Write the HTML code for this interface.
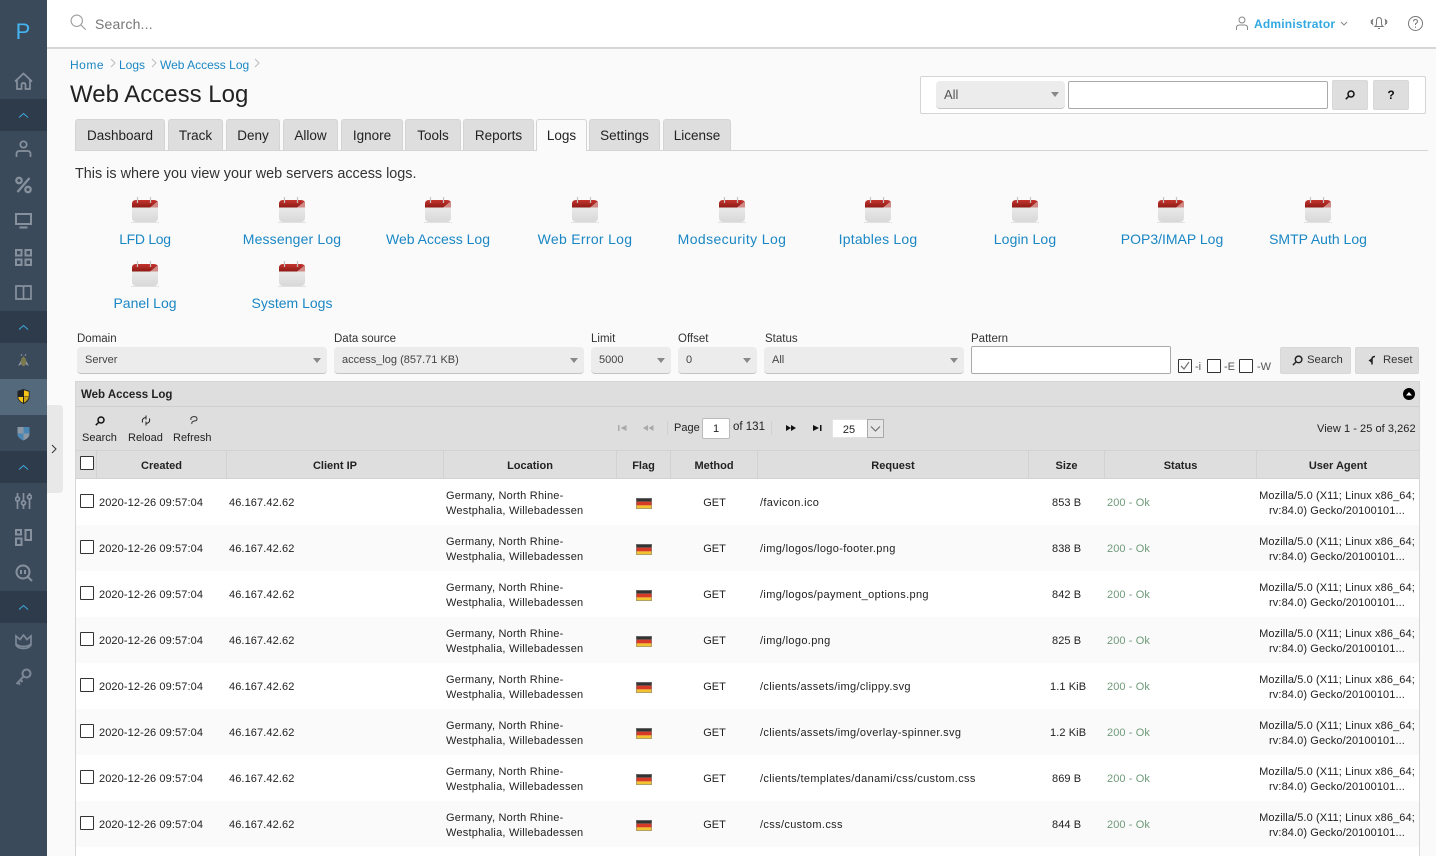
<!DOCTYPE html>
<html><head><meta charset="utf-8"><title>Web Access Log</title>
<style>
html,body{margin:0;padding:0}
body{width:1436px;height:856px;overflow:hidden;position:relative;background:#fafafa;font-family:"Liberation Sans",sans-serif;color:#222;font-size:11px}
.t{position:absolute;white-space:nowrap}
.c{text-align:center}
.a{position:absolute}
#side{position:absolute;left:0;top:0;width:47px;height:856px;background:#3b4a5b}
.band{position:absolute;left:0;width:47px;height:32px;background:#2e3b4a}
#side svg{position:absolute}
.ic{fill:none;stroke:#87919d;stroke-width:1.7}
.tab{position:absolute;top:119px;height:31px;background:#dedede;border:1px solid #d4d4d4;border-bottom:none;border-radius:3px 3px 0 0;box-sizing:border-box;text-align:center;font-size:13.5px;line-height:31px;color:#222}
.lk{position:absolute;width:160px;text-align:center;color:#1a87c4;font-size:14px;white-space:nowrap}
.sel{position:absolute;top:347px;height:27px;background:#ececec;border-bottom:1px solid #c4c4c4;border-radius:4px;box-sizing:border-box;padding:0 8px;line-height:27px;font-size:11px;color:#444}
.sel:after{content:"";position:absolute;right:6px;top:11px;border:4.5px solid transparent;border-top:5px solid #888;border-bottom:0}
.lab{position:absolute;top:333px;font-size:11.5px;color:#333}
.btn{position:absolute;background:#dedede;border:1px solid #d8d8d8;border-radius:2px;box-sizing:border-box}
.cb{position:absolute;width:12px;height:12px;border:1px solid #333;background:#fff;border-radius:1px}
.h{position:absolute;top:451px;height:28px;line-height:30px;text-align:center;font-weight:bold;font-size:11px;color:#222;border-right:1px solid #d2d2d2;box-sizing:border-box}
.r{position:absolute;left:76px;width:1343px;height:46px;background:#fff;font-size:11px;color:#222;letter-spacing:.1px}
.r.e{background:#fafafa}
.r .t{line-height:15px;top:17px}
.r .cb{left:4px;top:15px}
.r .l{left:370px;top:10px;letter-spacing:.22px}
.r .p{left:684px;letter-spacing:.35px}
.r .u{left:1181px;width:160px;text-align:center;top:10px}
.r .s{left:1031px;color:#6f9a7a}
.r .g{left:595px;width:87px;text-align:center;letter-spacing:0}
.r .i{left:153px}
.r .d{left:23px}
.r svg{position:absolute;left:560px;top:19px}
</style></head><body>

<div class="a" style="left:47px;top:0;width:1389px;height:47px;background:#fff;border-bottom:2px solid #d6d6d6"></div>
<svg class="a" style="left:70px;top:14px" width="18" height="18" viewBox="0 0 20 20" fill="none" stroke="#a0a0a0" stroke-width="1.300"><circle cx="7.500" cy="7.500" r="6.300"/><path d="M12 12l5.500 5.500"/></svg>
<div class="t" style="left:95px;top:16px;font-size:14px;color:#777;letter-spacing:.2px">Search...</div>

<svg class="a" style="left:1235px;top:16px" width="14" height="15" viewBox="0 0 14 15" fill="none" stroke="#888" stroke-width="1"><circle cx="7" cy="4" r="3"/><path d="M1.500 14v-2.500q0-2.500 3-2.500h5q3 0 3 2.500V14"/></svg>
<div class="t" style="left:1254px;top:17px;font-size:12px;font-weight:bold;color:#33a8e0;letter-spacing:.2px">Administrator</div>
<svg class="a" style="left:1340px;top:21px" width="8" height="6" viewBox="0 0 8 6" fill="none" stroke="#888" stroke-width="1"><path d="M1 1l3 3 3-3"/></svg>
<svg class="a" style="left:1370px;top:15px" width="18" height="16" viewBox="0 0 18 16" fill="none" stroke="#777" stroke-width="1"><path d="M5 11.500q1.500-1 1.500-3V6q0-3.500 2.500-3.500T11.500 6v2.500q0 2 1.500 3zM8 13.500h2"/><path d="M3 4q-1.500 3 0 6M1.500 5q-.7 2 0 4M15 4q1.500 3 0 6M16.500 5q.7 2 0 4"/></svg>
<svg class="a" style="left:1407px;top:15px" width="17" height="17" viewBox="0 0 17 17" fill="none" stroke="#777" stroke-width="1"><circle cx="8.500" cy="8.500" r="7"/><path d="M6.500 6.500q0-2 2-2t2 2q0 1.200-2 2.300v1.200M8.500 11.500v1.300"/></svg>

<div id="side">
 <div class="t c" style="left:0;width:46px;top:19px;font-size:22px;color:#44b4f0">P</div>
 <svg class="ic" style="left:14px;top:72px" width="19" height="18" viewBox="0 0 19 18"><path d="M1 9.500L9.500 1.500 18 9.500M3 8v9h4.500v-4q0-2 2-2t2 2v4H16V8"/></svg>
 <div class="band" style="top:99px"></div>
 <svg class="a" style="left:18px;top:112px" width="11" height="7" viewBox="0 0 11 7" fill="none" stroke="#3fa9e0" stroke-width="1"><path d="M1 5.500l4.500-4 4.500 4"/></svg>
 <svg class="ic" style="left:15px;top:140px" width="17" height="18" viewBox="0 0 17 18"><circle cx="8.500" cy="4.500" r="3.200"/><path d="M1.500 17v-3q0-3 3-3h8q3 0 3 3v3"/></svg>
 <svg class="ic" style="left:14px;top:176px;stroke-width:2.300" width="19" height="18" viewBox="0 0 19 18"><path d="M15.500 2L3.500 16"/><circle cx="5" cy="4.500" r="2.700"/><circle cx="14" cy="13.500" r="2.700"/></svg>
 <svg class="ic" style="left:15px;top:213px" width="17" height="16" viewBox="0 0 17 16"><path d="M1 1h15v10H1zM4.500 14.500h8" stroke-width="2"/></svg>
 <svg class="ic" style="left:15px;top:249px;stroke-width:2" width="17" height="17" viewBox="0 0 17 17"><path d="M1 1h5.500v5.500H1zM10.500 1H16v5.500h-5.500zM1 10.500h5.500V16H1zM10.500 10.500H16V16h-5.500z"/></svg>
 <svg class="ic" style="left:15px;top:285px" width="17" height="16" viewBox="0 0 17 16"><path d="M1 1h6q1.500 0 1.500 1.500Q8.500 1 10 1h6v13h-6q-1.500 0-1.500 1 0-1-1.500-1H1zM8.500 2.500V15"/></svg>
 <div class="band" style="top:311px"></div>
 <svg class="a" style="left:18px;top:324px" width="11" height="7" viewBox="0 0 11 7" fill="none" stroke="#3fa9e0" stroke-width="1"><path d="M1 5.500l4.500-4 4.500 4"/></svg>
 <svg class="a" style="left:16px;top:353px" width="15" height="15" viewBox="0 0 15 15"><path d="M7.500 3L2 13l4-2zM7.500 3L13 13l-4-2z" fill="#8d97a3"/><ellipse cx="7.500" cy="8.500" rx="2.600" ry="4.600" fill="#7b7a4c"/><circle cx="5.500" cy="2" r=".8" fill="#999"/><circle cx="9.500" cy="2" r=".8" fill="#999"/></svg>
 <div class="a" style="left:0;top:379px;width:47px;height:36px;background:#55697c"></div>
 <svg class="a" style="left:17px;top:389px" width="13" height="15" viewBox="0 0 13 15"><path d="M.5 2L6.500 0l6 2v6q0 4-6 7-6-3-6-7z" fill="#222"/><path d="M7 1.300l4.800 1.500v4.700H7zM1.300 8H6v5.800Q1.300 11.500 1.300 8z" fill="#f5c518"/><path d="M7 8h4.700Q11.500 11 7 13.800z" fill="#c9a417"/></svg>
 <svg class="a" style="left:17px;top:426px" width="13" height="15" viewBox="0 0 13 15"><path d="M.5 1h12v7q0 4-6 6.500Q.5 12 .5 8z" fill="#8b97a3"/><path d="M6.500 1h6v6.500h-6zM.5 7.500h6v7Q.5 12 .5 8z" fill="#4a86b4"/></svg>
 <div class="band" style="top:451px"></div>
 <svg class="a" style="left:18px;top:464px" width="11" height="7" viewBox="0 0 11 7" fill="none" stroke="#3fa9e0" stroke-width="1"><path d="M1 5.500l4.500-4 4.500 4"/></svg>
 <svg class="ic" style="left:15px;top:492px" width="17" height="18" viewBox="0 0 17 18"><path d="M2.500 1v4M2.500 9v8M8.500 1v8M8.500 13v4M14.500 1v2M14.500 7v10"/><circle cx="2.500" cy="7" r="2"/><circle cx="8.500" cy="11" r="2"/><circle cx="14.500" cy="5" r="2"/></svg>
 <svg class="ic" style="left:15px;top:529px;stroke-width:2" width="17" height="17" viewBox="0 0 17 17"><path d="M1 1h5v4.500H1zM10.500 1H16v10h-5.500zM1 9.500h5.500V16H1z"/></svg>
 <svg class="ic" style="left:15px;top:564px;stroke-width:2" width="18" height="18" viewBox="0 0 18 18"><circle cx="8" cy="8" r="6.500"/><path d="M12.500 12.500l4.500 4.500M6 6v4M10 6v4"/></svg>
 <div class="band" style="top:591px"></div>
 <svg class="a" style="left:18px;top:604px" width="11" height="7" viewBox="0 0 11 7" fill="none" stroke="#3fa9e0" stroke-width="1"><path d="M1 5.500l4.500-4 4.500 4"/></svg>
 <svg class="ic" style="left:15px;top:634px;stroke:#7c8896" width="17" height="16" viewBox="0 0 17 16"><path d="M1 2l4 3.500L8.500 1 12 5.500 16 2v9q-2 3.500-7.500 3.500T1 11zM1 10q3 2.500 7.500 2.500T16 10"/></svg>
 <svg class="ic" style="left:15px;top:668px;stroke:#7c8896;stroke-width:2" width="17" height="18" viewBox="0 0 17 18"><circle cx="11.500" cy="5.500" r="4"/><path d="M8.500 8.500L1.500 16M3 14.500l2 2M5.500 12l2 2"/></svg>
</div>
<div class="a" style="left:47px;top:405px;width:16px;height:88px;background:#e8e8e8;border-radius:0 4px 4px 0"></div>
<svg class="a" style="left:51px;top:444px" width="6" height="10" viewBox="0 0 6 10" fill="none" stroke="#333" stroke-width="1"><path d="M1 1l4 4-4 4"/></svg>

<div class="t" style="left:70px;top:58px;font-size:12px;color:#1a87c4;letter-spacing:.5px">Home</div>
<svg class="a" style="left:110px;top:58px" width="6" height="11" viewBox="0 0 6 11" fill="none" stroke="#bbb"><path d="M1 1l4 4-4 4"/></svg>
<div class="t" style="left:119px;top:58px;font-size:12px;color:#1a87c4">Logs</div>
<svg class="a" style="left:151px;top:58px" width="6" height="11" viewBox="0 0 6 11" fill="none" stroke="#bbb"><path d="M1 1l4 4-4 4"/></svg>
<div class="t" style="left:160px;top:58px;font-size:12px;color:#1a87c4">Web Access Log</div>
<svg class="a" style="left:254px;top:58px" width="6" height="11" viewBox="0 0 6 11" fill="none" stroke="#bbb"><path d="M1 1l4 4-4 4"/></svg>
<div class="t" style="left:70px;top:81px;font-size:24px;color:#222">Web Access Log</div>

<div class="a" style="left:920px;top:76px;width:506px;height:38px;box-sizing:border-box;background:#fff;border:1px solid #d4d4d4;border-radius:2px"></div>
<div class="sel" style="left:936px;top:81px;width:129px;height:28px;font-size:13px;line-height:28px;padding-left:8px;color:#555">All</div>
<div class="a" style="left:1068px;top:81px;width:260px;height:28px;box-sizing:border-box;background:#fff;border:1px solid #aaa;border-radius:2px"></div>
<div class="btn" style="left:1332px;top:80px;width:36px;height:30px"></div>
<svg class="a" style="left:1345px;top:90px" width="10" height="10" viewBox="0 0 10 10" fill="none" stroke="#111" stroke-width="1.500"><circle cx="6" cy="4" r="3"/><path d="M3.500 6.500L.8 9.200"/></svg>
<div class="btn" style="left:1373px;top:80px;width:36px;height:30px"></div>
<div class="t c" style="left:1373px;width:36px;top:88px;font-size:12px;font-weight:bold;color:#111">?</div>

<div class="a" style="left:75px;top:150px;width:1353px;height:1px;background:#d4d4d4"></div>
<div class="tab" style="left:75px;width:90px">Dashboard</div>
<div class="tab" style="left:168px;width:55px">Track</div>
<div class="tab" style="left:226px;width:54px">Deny</div>
<div class="tab" style="left:283px;width:55px">Allow</div>
<div class="tab" style="left:341px;width:62px">Ignore</div>
<div class="tab" style="left:405px;width:56px">Tools</div>
<div class="tab" style="left:463px;width:71px">Reports</div>
<div class="tab" style="left:536px;width:51px;height:32px;background:#fafafa;border-color:#d4d4d4;z-index:2">Logs</div>
<div class="tab" style="left:589px;width:71px">Settings</div>
<div class="tab" style="left:663px;width:68px">License</div>

<div class="t" style="left:75px;top:166px;font-size:14.400px;color:#333">This is where you view your web servers access logs.</div>

<svg width="0" height="0" style="position:absolute"><defs>
<linearGradient id="gb" x1="0" y1="0" x2="0" y2="1"><stop offset="0" stop-color="#f2f2f2"/><stop offset="1" stop-color="#d8d8d8"/></linearGradient>
<linearGradient id="gr" x1="0" y1="0" x2="0" y2="1"><stop offset="0" stop-color="#c4342e"/><stop offset="1" stop-color="#8e1a16"/></linearGradient>
<symbol id="cal" viewBox="0 0 28 26"><path d="M0 25.500h28" stroke="#e2e2e2"/><rect x="1" y="3" width="26" height="22" rx="4" fill="url(#gb)"/><path d="M1 10.500V7q0-4 4-4h18q4 0 4 4v3.500z" fill="url(#gr)"/><path d="M19 10.500L27 4v6.500z" fill="#d08a86"/><path d="M6.500 0v6M19.500 0v6" stroke="#c4c4c4" stroke-width="1.200"/></symbol></defs></svg>
<svg class="a" style="left:131px;top:197px" width="28" height="26"><use href="#cal"/></svg>
<svg class="a" style="left:278px;top:197px" width="28" height="26"><use href="#cal"/></svg>
<svg class="a" style="left:424px;top:197px" width="28" height="26"><use href="#cal"/></svg>
<svg class="a" style="left:571px;top:197px" width="28" height="26"><use href="#cal"/></svg>
<svg class="a" style="left:718px;top:197px" width="28" height="26"><use href="#cal"/></svg>
<svg class="a" style="left:864px;top:197px" width="28" height="26"><use href="#cal"/></svg>
<svg class="a" style="left:1011px;top:197px" width="28" height="26"><use href="#cal"/></svg>
<svg class="a" style="left:1157px;top:197px" width="28" height="26"><use href="#cal"/></svg>
<svg class="a" style="left:1304px;top:197px" width="28" height="26"><use href="#cal"/></svg>
<svg class="a" style="left:131px;top:261px" width="28" height="26"><use href="#cal"/></svg>
<svg class="a" style="left:278px;top:261px" width="28" height="26"><use href="#cal"/></svg>
<div class="lk" style="left:65px;top:231px;letter-spacing:-.3px">LFD Log</div>
<div class="lk" style="left:212px;top:231px;letter-spacing:.15px">Messenger Log</div>
<div class="lk" style="left:358px;top:231px">Web Access Log</div>
<div class="lk" style="left:505px;top:231px;letter-spacing:.3px">Web Error Log</div>
<div class="lk" style="left:652px;top:231px;letter-spacing:.4px">Modsecurity Log</div>
<div class="lk" style="left:798px;top:231px;letter-spacing:.2px">Iptables Log</div>
<div class="lk" style="left:945px;top:231px;letter-spacing:.1px">Login Log</div>
<div class="lk" style="left:1092px;top:231px">POP3/IMAP Log</div>
<div class="lk" style="left:1238px;top:231px">SMTP Auth Log</div>
<div class="lk" style="left:65px;top:295px">Panel Log</div>
<div class="lk" style="left:212px;top:295px">System Logs</div>

<div class="lab" style="left:77px">Domain</div>
<div class="lab" style="left:334px">Data source</div>
<div class="lab" style="left:591px">Limit</div>
<div class="lab" style="left:678px">Offset</div>
<div class="lab" style="left:765px">Status</div>
<div class="lab" style="left:971px">Pattern</div>
<div class="sel" style="left:77px;width:250px">Server</div>
<div class="sel" style="left:334px;width:250px">access_log (857.71 KB)</div>
<div class="sel" style="left:591px;width:80px">5000</div>
<div class="sel" style="left:678px;width:79px">0</div>
<div class="sel" style="left:764px;width:200px">All</div>
<div class="a" style="left:971px;top:346px;width:200px;height:28px;box-sizing:border-box;background:#fff;border:1px solid #aaa;border-radius:2px"></div>
<div class="cb" style="left:1178px;top:359px"></div>
<svg class="a" style="left:1179px;top:360px" width="12" height="12" viewBox="0 0 12 12" fill="none" stroke="#777" stroke-width="1.300"><path d="M2 6l3 3 5-7"/></svg>
<div class="t" style="left:1195px;top:361px;color:#555;font-size:11px">-i</div>
<div class="cb" style="left:1207px;top:359px"></div>
<div class="t" style="left:1224px;top:361px;color:#555;font-size:11px">-E</div>
<div class="cb" style="left:1239px;top:359px"></div>
<div class="t" style="left:1257px;top:361px;color:#555;font-size:11px">-W</div>
<div class="btn" style="left:1280px;top:347px;width:71px;height:27px"></div>
<svg class="a" style="left:1292px;top:355px" width="11" height="11" viewBox="0 0 10 10" fill="none" stroke="#222" stroke-width="1.300"><circle cx="6" cy="4" r="3"/><path d="M3.500 6.500L.8 9.200"/></svg>
<div class="t" style="left:1307px;top:354px;font-size:11.300px;color:#333">Search</div>
<div class="btn" style="left:1355px;top:347px;width:64px;height:27px"></div>
<svg class="a" style="left:1367px;top:355px" width="10" height="10" viewBox="0 0 10 10"><path d="M5 9.500V4q0-2.500 3-2.500" fill="none" stroke="#222" stroke-width="1.500"/><path d="M1.500 5.500L5 3v5z" fill="#222"/></svg>
<div class="t" style="left:1383px;top:354px;font-size:11.300px;color:#333">Reset</div>

<div class="a" style="left:75px;top:381px;width:1345px;height:475px;box-sizing:border-box;border:1px solid #d6d6d6;border-bottom:none;background:#fff"></div>
<div class="a" style="left:76px;top:382px;width:1343px;height:25px;background:#dedede;border-bottom:1px solid #cfcfcf;box-sizing:border-box"></div>
<div class="t" style="left:81px;top:389px;font-size:11.500px;font-weight:bold;color:#222">Web Access Log</div>
<svg class="a" style="left:1403px;top:388px" width="12" height="12" viewBox="0 0 12 12"><circle cx="6" cy="6" r="6" fill="#000"/><path d="M3 7.500L6 4l3 3.500z" fill="#fff"/></svg>
<div class="a" style="left:76px;top:407px;width:1343px;height:44px;background:#dedede;border-bottom:1px solid #d2d2d2;box-sizing:border-box"></div>
<svg class="a" style="left:95px;top:416px" width="10" height="10" viewBox="0 0 10 10" fill="none" stroke="#111" stroke-width="1.500"><circle cx="6" cy="4" r="3"/><path d="M3.500 6.500L.8 9.200"/></svg>
<svg class="a" style="left:141px;top:415px" width="10" height="11" viewBox="0 0 10 11" fill="none" stroke="#222" stroke-width="1"><path d="M1.500 7.500Q.5 3 5 2.500M8.500 3.500Q9.500 8 5 8.500M5 .5v4M5 6.500v4"/></svg>
<svg class="a" style="left:189px;top:415px" width="9" height="10" viewBox="0 0 9 10" fill="none" stroke="#333" stroke-width="1"><path d="M2 5q-1-3 3-3.500 3 0 3 2.500 0 2-3 2M3 9q-1-2 2-3"/></svg>
<div class="t" style="left:82px;top:432px;font-size:11px">Search</div>
<div class="t" style="left:128px;top:432px;font-size:11px">Reload</div>
<div class="t" style="left:173px;top:432px;font-size:11px">Refresh</div>
<svg class="a" style="left:617px;top:424px" width="11" height="8" viewBox="0 0 11 8" fill="#aaa"><path d="M1 1h1.500v6H1zM9.500 1v6L3.500 4z"/></svg>
<svg class="a" style="left:642px;top:424px" width="12" height="8" viewBox="0 0 12 8" fill="#aaa"><path d="M6 1v6L1 4zM11.500 1v6L6.500 4z"/></svg>
<div class="a" style="left:667px;top:421px;width:1px;height:14px;background:#d0d0d0"></div>
<div class="t" style="left:674px;top:422px;font-size:11px">Page</div>
<div class="a" style="left:702px;top:418px;width:28px;height:21px;box-sizing:border-box;background:#fff;border:1px solid #bbb;border-radius:2px;text-align:center;line-height:20px;font-size:11px">1</div>
<div class="t" style="left:733px;top:421px;font-size:11.500px">of 131</div>
<div class="a" style="left:771px;top:421px;width:1px;height:14px;background:#d0d0d0"></div>
<svg class="a" style="left:785px;top:424px" width="12" height="8" viewBox="0 0 12 8"><path d="M1 1v6l5-3zM6 1v6l5-3z" fill="#111"/></svg>
<svg class="a" style="left:812px;top:424px" width="11" height="8" viewBox="0 0 11 8" fill="#111"><path d="M1 1v6l6-3zM8 1h1.500v6H8z"/></svg>
<div class="a" style="left:832px;top:419px;width:52px;height:19px;box-sizing:border-box;background:#fff;text-align:center;padding-right:18px;line-height:20px;font-size:11px;border:1px solid #e4e4e4">25</div>
<div class="a" style="left:867px;top:419px;width:17px;height:19px;box-sizing:border-box;background:#e6e6e6;border:1px solid #aaa"></div>
<svg class="a" style="left:870px;top:426px" width="11" height="6" viewBox="0 0 11 6" fill="none" stroke="#666"><path d="M1 .5l4.500 4.500L10 .5"/></svg>

<div class="a" style="left:76px;top:451px;width:1343px;height:28px;background:#dedede;border-bottom:1px solid #d2d2d2;box-sizing:border-box"></div>
<div class="h" style="left:76px;width:21px"></div>
<div class="cb" style="left:80px;top:456px"></div>
<div class="h" style="left:97px;width:130px">Created</div>
<div class="h" style="left:227px;width:217px">Client IP</div>
<div class="h" style="left:444px;width:173px">Location</div>
<div class="h" style="left:617px;width:54px">Flag</div>
<div class="h" style="left:671px;width:87px">Method</div>
<div class="h" style="left:758px;width:271px">Request</div>
<div class="h" style="left:1029px;width:76px">Size</div>
<div class="h" style="left:1105px;width:152px">Status</div>
<div class="h" style="left:1257px;width:162px;border-right:none">User Agent</div>

<svg width="0" height="0" style="position:absolute"><defs><symbol id="de" viewBox="0 0 16 11"><rect width="16" height="3.700" fill="#333"/><rect y="3.700" width="16" height="3.700" fill="#d83a28"/><rect y="7.400" width="16" height="3.600" fill="#f2c230"/><rect x=".5" y=".5" width="15" height="10" fill="none" stroke="#888" stroke-opacity=".6"/></symbol></defs></svg>

<div class="r" style="top:479px"><div class="cb"></div><div class="t d">2020-12-26 09:57:04</div><div class="t i">46.167.42.62</div><div class="t l">Germany, North Rhine-<br>Westphalia, Willebadessen</div><svg width="16" height="11"><use href="#de"/></svg><div class="t g">GET</div><div class="t p">/favicon.ico</div><div class="t" style="left:976px">853 B</div><div class="t s">200 - Ok</div><div class="t u">Mozilla/5.0 (X11; Linux x86_64;<br>rv:84.0) Gecko/20100101...</div></div>
<div class="r e" style="top:525px"><div class="cb"></div><div class="t d">2020-12-26 09:57:04</div><div class="t i">46.167.42.62</div><div class="t l">Germany, North Rhine-<br>Westphalia, Willebadessen</div><svg width="16" height="11"><use href="#de"/></svg><div class="t g">GET</div><div class="t p">/img/logos/logo-footer.png</div><div class="t" style="left:976px">838 B</div><div class="t s">200 - Ok</div><div class="t u">Mozilla/5.0 (X11; Linux x86_64;<br>rv:84.0) Gecko/20100101...</div></div>
<div class="r" style="top:571px"><div class="cb"></div><div class="t d">2020-12-26 09:57:04</div><div class="t i">46.167.42.62</div><div class="t l">Germany, North Rhine-<br>Westphalia, Willebadessen</div><svg width="16" height="11"><use href="#de"/></svg><div class="t g">GET</div><div class="t p">/img/logos/payment_options.png</div><div class="t" style="left:976px">842 B</div><div class="t s">200 - Ok</div><div class="t u">Mozilla/5.0 (X11; Linux x86_64;<br>rv:84.0) Gecko/20100101...</div></div>
<div class="r e" style="top:617px"><div class="cb"></div><div class="t d">2020-12-26 09:57:04</div><div class="t i">46.167.42.62</div><div class="t l">Germany, North Rhine-<br>Westphalia, Willebadessen</div><svg width="16" height="11"><use href="#de"/></svg><div class="t g">GET</div><div class="t p">/img/logo.png</div><div class="t" style="left:976px">825 B</div><div class="t s">200 - Ok</div><div class="t u">Mozilla/5.0 (X11; Linux x86_64;<br>rv:84.0) Gecko/20100101...</div></div>
<div class="r" style="top:663px"><div class="cb"></div><div class="t d">2020-12-26 09:57:04</div><div class="t i">46.167.42.62</div><div class="t l">Germany, North Rhine-<br>Westphalia, Willebadessen</div><svg width="16" height="11"><use href="#de"/></svg><div class="t g">GET</div><div class="t p">/clients/assets/img/clippy.svg</div><div class="t" style="left:974px">1.1 KiB</div><div class="t s">200 - Ok</div><div class="t u">Mozilla/5.0 (X11; Linux x86_64;<br>rv:84.0) Gecko/20100101...</div></div>
<div class="r e" style="top:709px"><div class="cb"></div><div class="t d">2020-12-26 09:57:04</div><div class="t i">46.167.42.62</div><div class="t l">Germany, North Rhine-<br>Westphalia, Willebadessen</div><svg width="16" height="11"><use href="#de"/></svg><div class="t g">GET</div><div class="t p">/clients/assets/img/overlay-spinner.svg</div><div class="t" style="left:974px">1.2 KiB</div><div class="t s">200 - Ok</div><div class="t u">Mozilla/5.0 (X11; Linux x86_64;<br>rv:84.0) Gecko/20100101...</div></div>
<div class="r" style="top:755px"><div class="cb"></div><div class="t d">2020-12-26 09:57:04</div><div class="t i">46.167.42.62</div><div class="t l">Germany, North Rhine-<br>Westphalia, Willebadessen</div><svg width="16" height="11"><use href="#de"/></svg><div class="t g">GET</div><div class="t p">/clients/templates/danami/css/custom.css</div><div class="t" style="left:976px">869 B</div><div class="t s">200 - Ok</div><div class="t u">Mozilla/5.0 (X11; Linux x86_64;<br>rv:84.0) Gecko/20100101...</div></div>
<div class="r e" style="top:801px"><div class="cb"></div><div class="t d">2020-12-26 09:57:04</div><div class="t i">46.167.42.62</div><div class="t l">Germany, North Rhine-<br>Westphalia, Willebadessen</div><svg width="16" height="11"><use href="#de"/></svg><div class="t g">GET</div><div class="t p">/css/custom.css</div><div class="t" style="left:976px">844 B</div><div class="t s">200 - Ok</div><div class="t u">Mozilla/5.0 (X11; Linux x86_64;<br>rv:84.0) Gecko/20100101...</div></div>

<div class="t" style="left:1317px;top:423px;font-size:11px;letter-spacing:.05px">View 1 - 25 of 3,262</div>
</body></html>
